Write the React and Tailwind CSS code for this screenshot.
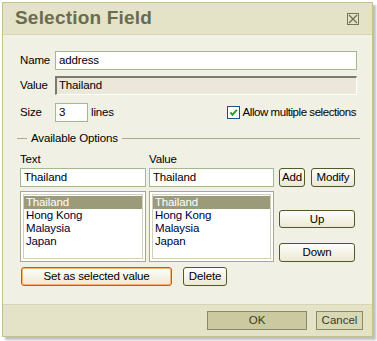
import React from "react";

const font = { fontFamily: '"Liberation Sans", Arial, sans-serif' };

function Btn({ children, className = "" }) {
  return (
    <div
      className={`flex items-center justify-center rounded-[3px] border border-[#4f5a26] bg-gradient-to-b from-[#fffff8] to-[#ece8d6] text-[11.5px] leading-none text-black ${className}`}
    >
      {children}
    </div>
  );
}

function Input({ children, className = "" }) {
  return (
    <div
      className={`flex h-[19px] items-center border border-[#a3b98c] bg-white px-[3px] text-[11.5px] leading-none text-black ${className}`}
    >
      {children}
    </div>
  );
}

function ListBox({ className = "" }) {
  const items = ["Thailand", "Hong Kong", "Malaysia", "Japan"];
  return (
    <div className={`h-[71px] border border-[#a8a88a] bg-white p-[2px] ${className}`}>
      <div className="h-full border border-[#cfcfbb] pt-[1px]">
        {items.map((t, i) => (
          <div
            key={t}
            className={`h-[13px] pl-[2px] text-[11.5px] leading-[13px] ${
              i === 0 ? "bg-[#9b9b7a] text-white" : "text-[#000033]"
            }`}
          >
            {t}
          </div>
        ))}
      </div>
    </div>
  );
}

export default function App() {
  return (
    <div className="h-[341px] w-[377px] bg-white" style={font}>
      <div className="pl-[2px] pt-[2px]">
        <div className="flex h-[335px] w-[371px] flex-col border border-[#c2c28c] bg-[#f1f0e4] shadow-[3px_3px_2px_rgba(0,0,0,0.25)]">
          {/* title */}
          <div className="flex h-[32px] items-center justify-between border-b border-[#d6d5b5] bg-[#e4e3c8] pl-[12px] pr-[13px]">
            <span className="text-[19px] font-bold tracking-[0.2px] text-[#6b6b52]">
              Selection Field
            </span>
            <div className="flex h-[12px] w-[12px] items-center justify-center border border-[#75755a]">
              <svg width="10" height="10" viewBox="0 0 10 10">
                <path d="M1 1 L9 9 M9 1 L1 9" stroke="#6b6b52" strokeWidth="1.2" />
              </svg>
            </div>
          </div>

          {/* content */}
          <div className="flex flex-1 flex-col px-[14px] pt-[16px] text-[11.5px] tracking-[-0.15px]">
            <div className="flex items-center">
              <span className="w-[38px] pl-[3px]">Name</span>
              <Input className="w-[302px]">address</Input>
            </div>
            <div className="mt-[6px] flex items-center">
              <span className="w-[38px] pl-[3px]">Value</span>
              <div className="flex h-[19px] w-[302px] items-center border-t-2 border-l-2 border-[#7c7b6b] border-b border-r border-b-white border-r-white bg-[#ebe8d9] px-[2px] leading-none">
                Thailand
              </div>
            </div>
            <div className="mt-[8px] flex items-center">
              <span className="w-[38px] pl-[3px]">Size</span>
              <Input className="w-[33px]">3</Input>
              <span className="ml-[3px]">lines</span>
              <div className="ml-auto mr-[2px] flex items-center">
                <div className="flex h-[13px] w-[13px] items-center justify-center border border-[#1c5180] bg-white">
                  <svg width="9" height="9" viewBox="0 0 9 9">
                    <path d="M1.5 4.5 L3.5 6.8 L7.8 1.8" fill="none" stroke="#21a121" strokeWidth="2" />
                  </svg>
                </div>
                <span className="ml-[3px] tracking-[-0.45px]">Allow multiple selections</span>
              </div>
            </div>

            {/* fieldset legend */}
            <div className="mt-[8px] flex items-center">
              <div className="h-px w-[10px] bg-[#a9a890]" />
              <span className="px-[4px]">Available Options</span>
              <div className="mr-[-2px] h-px flex-1 bg-[#a9a890]" />
            </div>

            <div className="mt-[5px] flex pl-[3px]">
              <div className="flex w-[129px] flex-col">
                <span className="leading-[14px]">Text</span>
                <Input className="mt-[2px] w-[126px] text-[#2a0033]">Thailand</Input>
                <ListBox className="mt-[4px] w-[126px]" />
              </div>
              <div className="flex w-[130px] flex-col">
                <span className="leading-[14px]">Value</span>
                <Input className="mt-[2px] w-[125px]">Thailand</Input>
                <ListBox className="mt-[4px] w-[125px]" />
              </div>
              <div className="flex flex-col pt-[16px]">
                <div className="flex">
                  <Btn className="h-[19px] w-[26px]">Add</Btn>
                  <Btn className="ml-[6px] h-[19px] w-[44px]">Modify</Btn>
                </div>
                <Btn className="mt-[23px] h-[18px] w-[76px]">Up</Btn>
                <Btn className="mt-[15px] h-[19px] w-[76px]">Down</Btn>
              </div>
            </div>

            <div className="mt-[5px] flex pl-[4px]">
              <Btn className="h-[19px] w-[151px] border-[#c45a1c] shadow-[inset_0_0_0_1px_#f4b274]">
                Set as selected value
              </Btn>
              <Btn className="ml-[11px] h-[19px] w-[44px]">Delete</Btn>
            </div>
          </div>

          {/* footer */}
          <div className="flex h-[32px] items-center justify-end border-t border-[#d6d5b5] bg-[#e4e3c8] pr-[9px]">
            <div className="flex h-[19px] w-[100px] items-center justify-center border border-[#8c8a66] bg-[#cbc9a0] text-[11.5px] text-[#3a3a2a]">
              OK
            </div>
            <div className="ml-[9px] flex h-[19px] w-[47px] items-center justify-center border border-[#8c8a66] bg-[#d9d8b4] text-[11.5px] text-[#3a3a2a]">
              Cancel
            </div>
          </div>
        </div>
      </div>
    </div>
  );
}
